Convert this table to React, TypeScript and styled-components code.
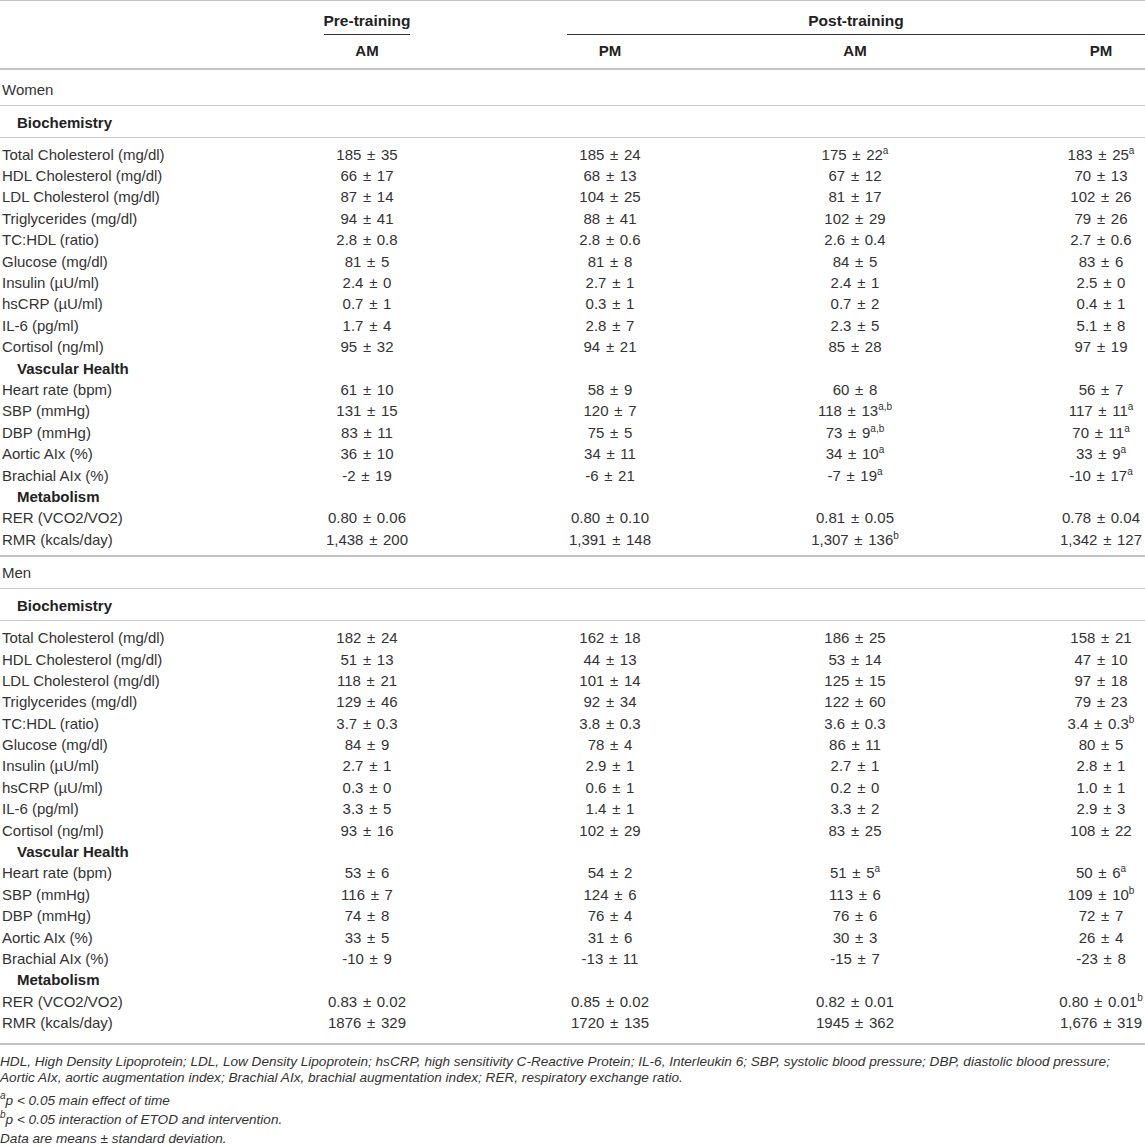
import React from "react";
import styled, { createGlobalStyle } from "styled-components";

const GlobalStyle = createGlobalStyle`
  html, body {
    margin: 0;
    padding: 0;
    background: #ffffff;
  }
  body {
    font-family: "Liberation Sans", Arial, Helvetica, sans-serif;
    color: #333333;
  }
`;

const COLS = "167px 400px 86px 404px 88px";

const Page = styled.div`
  width: 1145px;
`;

const Table = styled.div`
  border-top: 1px solid #c4c4c4;
`;

const HeadRow = styled.div`
  display: grid;
  grid-template-columns: ${COLS};
  font-size: 15px;
  font-weight: bold;
  color: #222;
  line-height: 20px;
`;

const GroupCell = styled.div<{ $span?: number; $start: number; $rule?: boolean }>`
  grid-column: ${(p) => p.$start} / span ${(p) => p.$span ?? 1};
  text-align: center;
  font-size: 15.5px;
  padding: 10px 0 3px;
  border-bottom: ${(p) => (p.$rule ? "1px solid #333" : "1px solid transparent")};
`;

const GroupLabel = styled.span<{ $rule?: boolean }>`
  display: inline-block;
  padding-bottom: 3px;
  margin-bottom: -4px;
  border-bottom: ${(p) => (p.$rule ? "1px solid #333" : "none")};
`;

const ColHeadRow = styled(HeadRow)`
  padding: 6px 0 7px;
  border-bottom: 2px solid #c4c4c4;
`;

const HeadCell = styled.div`
  text-align: center;
`;

const SectionRow = styled.div<{ $top: number }>`
  font-size: 15px;
  line-height: 20px;
  padding: ${(p) => p.$top}px 0 5px 2px;
  border-bottom: 1px solid #c8c8c8;
`;

const CategoryRow = styled.div<{ $top: number }>`
  font-size: 15px;
  line-height: 20px;
  font-weight: bold;
  color: #222;
  padding: ${(p) => p.$top}px 0 4px 17px;
  border-bottom: 1px solid #c8c8c8;
`;

const DataBlock = styled.div<{ $bottom: number }>`
  padding: 6px 0 ${(p) => p.$bottom}px;
  border-bottom: 2px solid #c4c4c4;
`;

const DataRow = styled.div`
  display: grid;
  grid-template-columns: ${COLS};
  height: 21.4px;
  align-items: center;
  font-size: 15px;
  line-height: 20px;
`;

const Label = styled.div`
  padding-left: 2px;
  white-space: nowrap;
`;

const SubHead = styled.div`
  grid-column: 1 / -1;
  padding-left: 17px;
  font-weight: bold;
  color: #222;
`;

const Value = styled.div`
  text-align: center;
  white-space: nowrap;
  word-spacing: 1.5px;
`;

const Sup = styled.sup`
  font-size: 10px;
  line-height: 0;
  vertical-align: super;
  word-spacing: 0;
`;

const Notes = styled.div`
  padding-top: 9px;
  font-size: 13.6px;
  font-style: italic;
  color: #333;
`;

const NoteLead = styled.p`
  margin: 0 0 5px;
  line-height: 16px;
`;

const Note = styled.p`
  margin: 0;
  line-height: 19px;
`;

type Row = { label?: string; head?: string; v?: string[] };

const women: Row[] = [
  { label: "Total Cholesterol (mg/dl)", v: ["185 ± 35", "185 ± 24", "175 ± 22^a", "183 ± 25^a"] },
  { label: "HDL Cholesterol (mg/dl)", v: ["66 ± 17", "68 ± 13", "67 ± 12", "70 ± 13"] },
  { label: "LDL Cholesterol (mg/dl)", v: ["87 ± 14", "104 ± 25", "81 ± 17", "102 ± 26"] },
  { label: "Triglycerides (mg/dl)", v: ["94 ± 41", "88 ± 41", "102 ± 29", "79 ± 26"] },
  { label: "TC:HDL (ratio)", v: ["2.8 ± 0.8", "2.8 ± 0.6", "2.6 ± 0.4", "2.7 ± 0.6"] },
  { label: "Glucose (mg/dl)", v: ["81 ± 5", "81 ± 8", "84 ± 5", "83 ± 6"] },
  { label: "Insulin (µU/ml)", v: ["2.4 ± 0", "2.7 ± 1", "2.4 ± 1", "2.5 ± 0"] },
  { label: "hsCRP (µU/ml)", v: ["0.7 ± 1", "0.3 ± 1", "0.7 ± 2", "0.4 ± 1"] },
  { label: "IL-6 (pg/ml)", v: ["1.7 ± 4", "2.8 ± 7", "2.3 ± 5", "5.1 ± 8"] },
  { label: "Cortisol (ng/ml)", v: ["95 ± 32", "94 ± 21", "85 ± 28", "97 ± 19"] },
  { head: "Vascular Health" },
  { label: "Heart rate (bpm)", v: ["61 ± 10", "58 ± 9", "60 ± 8", "56 ± 7"] },
  { label: "SBP (mmHg)", v: ["131 ± 15", "120 ± 7", "118 ± 13^a,b", "117 ± 11^a"] },
  { label: "DBP (mmHg)", v: ["83 ± 11", "75 ± 5", "73 ± 9^a,b", "70 ± 11^a"] },
  { label: "Aortic AIx (%)", v: ["36 ± 10", "34 ± 11", "34 ± 10^a", "33 ± 9^a"] },
  { label: "Brachial AIx (%)", v: ["-2 ± 19", "-6 ± 21", "-7 ± 19^a", "-10 ± 17^a"] },
  { head: "Metabolism" },
  { label: "RER (VCO2/VO2)", v: ["0.80 ± 0.06", "0.80 ± 0.10", "0.81 ± 0.05", "0.78 ± 0.04"] },
  { label: "RMR (kcals/day)", v: ["1,438 ± 200", "1,391 ± 148", "1,307 ± 136^b", "1,342 ± 127"] },
];

const men: Row[] = [
  { label: "Total Cholesterol (mg/dl)", v: ["182 ± 24", "162 ± 18", "186 ± 25", "158 ± 21"] },
  { label: "HDL Cholesterol (mg/dl)", v: ["51 ± 13", "44 ± 13", "53 ± 14", "47 ± 10"] },
  { label: "LDL Cholesterol (mg/dl)", v: ["118 ± 21", "101 ± 14", "125 ± 15", "97 ± 18"] },
  { label: "Triglycerides (mg/dl)", v: ["129 ± 46", "92 ± 34", "122 ± 60", "79 ± 23"] },
  { label: "TC:HDL (ratio)", v: ["3.7 ± 0.3", "3.8 ± 0.3", "3.6 ± 0.3", "3.4 ± 0.3^b"] },
  { label: "Glucose (mg/dl)", v: ["84 ± 9", "78 ± 4", "86 ± 11", "80 ± 5"] },
  { label: "Insulin (µU/ml)", v: ["2.7 ± 1", "2.9 ± 1", "2.7 ± 1", "2.8 ± 1"] },
  { label: "hsCRP (µU/ml)", v: ["0.3 ± 0", "0.6 ± 1", "0.2 ± 0", "1.0 ± 1"] },
  { label: "IL-6 (pg/ml)", v: ["3.3 ± 5", "1.4 ± 1", "3.3 ± 2", "2.9 ± 3"] },
  { label: "Cortisol (ng/ml)", v: ["93 ± 16", "102 ± 29", "83 ± 25", "108 ± 22"] },
  { head: "Vascular Health" },
  { label: "Heart rate (bpm)", v: ["53 ± 6", "54 ± 2", "51 ± 5^a", "50 ± 6^a"] },
  { label: "SBP (mmHg)", v: ["116 ± 7", "124 ± 6", "113 ± 6", "109 ± 10^b"] },
  { label: "DBP (mmHg)", v: ["74 ± 8", "76 ± 4", "76 ± 6", "72 ± 7"] },
  { label: "Aortic AIx (%)", v: ["33 ± 5", "31 ± 6", "30 ± 3", "26 ± 4"] },
  { label: "Brachial AIx (%)", v: ["-10 ± 9", "-13 ± 11", "-15 ± 7", "-23 ± 8"] },
  { head: "Metabolism" },
  { label: "RER (VCO2/VO2)", v: ["0.83 ± 0.02", "0.85 ± 0.02", "0.82 ± 0.01", "0.80 ± 0.01^b"] },
  { label: "RMR (kcals/day)", v: ["1876 ± 329", "1720 ± 135", "1945 ± 362", "1,676 ± 319"] },
];

function Cell({ text }: { text: string }) {
  const [main, sup] = text.split("^");
  return (
    <Value>
      {main}
      {sup ? <Sup>{sup}</Sup> : null}
    </Value>
  );
}

function Section({
  title,
  rows,
  top,
  bottom,
}: {
  title: string;
  rows: Row[];
  top: number;
  bottom: number;
}) {
  return (
    <>
      <SectionRow $top={top}>{title}</SectionRow>
      <CategoryRow $top={7}>Biochemistry</CategoryRow>
      <DataBlock $bottom={bottom}>
        {rows.map((r, i) =>
          r.head ? (
            <DataRow key={i}>
              <SubHead>{r.head}</SubHead>
            </DataRow>
          ) : (
            <DataRow key={i}>
              <Label>{r.label}</Label>
              {r.v!.map((t, j) => (
                <Cell key={j} text={t} />
              ))}
            </DataRow>
          )
        )}
      </DataBlock>
    </>
  );
}

export default function App() {
  return (
    <Page>
      <GlobalStyle />
      <Table>
        <HeadRow>
          <GroupCell $start={2}>
            <GroupLabel $rule>Pre-training</GroupLabel>
          </GroupCell>
          <GroupCell $start={3} $span={3} $rule>
            Post-training
          </GroupCell>
        </HeadRow>
        <ColHeadRow>
          <span />
          <HeadCell>AM</HeadCell>
          <HeadCell>PM</HeadCell>
          <HeadCell>AM</HeadCell>
          <HeadCell>PM</HeadCell>
        </ColHeadRow>
        <Section title="Women" rows={women} top={10} bottom={5} />
        <Section title="Men" rows={men} top={6} bottom={9} />
      </Table>
      <Notes>
        <NoteLead>
          HDL, High Density Lipoprotein; LDL, Low Density Lipoprotein; hsCRP, high sensitivity C-Reactive Protein; IL-6,
          Interleukin 6; SBP, systolic blood pressure; DBP, diastolic blood pressure;
          <br />
          Aortic AIx, aortic augmentation index; Brachial AIx, brachial augmentation index; RER, respiratory exchange ratio.
        </NoteLead>
        <Note>
          <Sup>a</Sup>p &lt; 0.05 main effect of time
        </Note>
        <Note>
          <Sup>b</Sup>p &lt; 0.05 interaction of ETOD and intervention.
        </Note>
        <Note>Data are means ± standard deviation.</Note>
      </Notes>
    </Page>
  );
}
